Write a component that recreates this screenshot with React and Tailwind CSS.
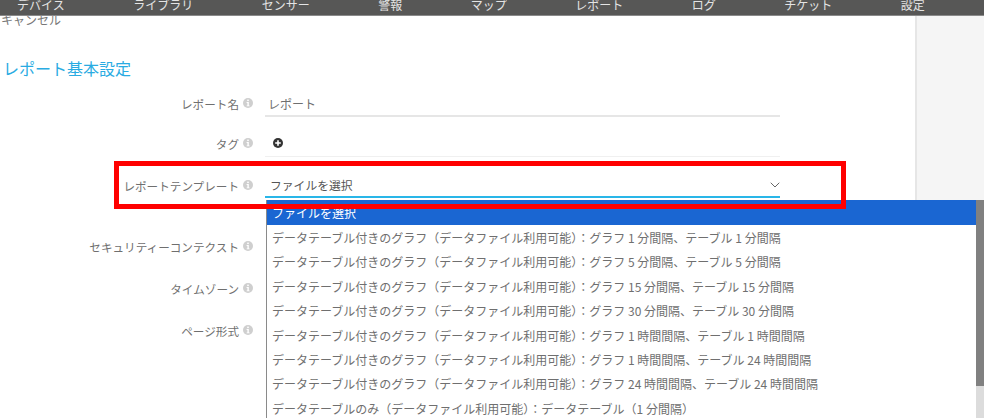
import React from "react";
import { ChevronDown } from "lucide-react";

const NAV = ["デバイス", "ライブラリ", "センサー", "警報", "マップ", "レポート", "ログ", "チケット", "設定"];

const OPTIONS = [
  "データテーブル付きのグラフ（データファイル利用可能）：グラフ 1 分間隔、テーブル 1 分間隔",
  "データテーブル付きのグラフ（データファイル利用可能）：グラフ 5 分間隔、テーブル 5 分間隔",
  "データテーブル付きのグラフ（データファイル利用可能）：グラフ 15 分間隔、テーブル 15 分間隔",
  "データテーブル付きのグラフ（データファイル利用可能）：グラフ 30 分間隔、テーブル 30 分間隔",
  "データテーブル付きのグラフ（データファイル利用可能）：グラフ 1 時間間隔、テーブル 1 時間間隔",
  "データテーブル付きのグラフ（データファイル利用可能）：グラフ 1 時間間隔、テーブル 24 時間間隔",
  "データテーブル付きのグラフ（データファイル利用可能）：グラフ 24 時間間隔、テーブル 24 時間間隔",
  "データテーブルのみ（データファイル利用可能）：データテーブル（1 分間隔）",
];

function InfoDot() {
  return (
    <svg viewBox="0 0 10 10" className="w-[10px] h-[10px] shrink-0 mb-[3px]">
      <circle cx="5" cy="5" r="5" fill="#cfcfcf" />
      <rect x="4.2" y="1.6" width="1.6" height="1.5" fill="#fff" />
      <path d="M3.6 4h2.2v3.4h.8v.9H3.6v-.9h.8V4.9h-.8z" fill="#fff" />
    </svg>
  );
}

function Label({ text }) {
  return (
    <div className="w-[253px] shrink-0 flex items-center justify-end gap-[4px] text-[11.6px] leading-[17px] text-[#6f6f6f]">
      <span>{text}</span>
      <InfoDot />
    </div>
  );
}

export default function App() {
  return (
    <div
      className="relative w-[984px] h-[418px] overflow-hidden bg-[#f5f5f5]"
      style={{ fontFamily: '"Noto Sans CJK JP", "Noto Sans", sans-serif' }}
    >
      <div className="relative z-10 h-[16px] bg-[#575756] border-b border-[#8a8a8a] overflow-hidden">
        <div className="flex gap-[68.5px] pl-[17px] -mt-[4px] text-[12px] leading-[18px] text-[#e4e4e4]">
          {NAV.map((n) => (
            <span key={n} className="shrink-0">{n}</span>
          ))}
        </div>
      </div>

      <div className="flex flex-col w-[917px] h-[402px] bg-white border-r-2 border-[#e6e6e6]">
        <div className="text-[12px] leading-[12px] text-[#777] pl-[1px] -mt-[2px]">キャンセル</div>
        <div className="text-[16px] leading-[16px] text-[#29abe2] pl-[3px] mt-[34px]">レポート基本設定</div>

        <div className="flex flex-col">
          <div className="flex h-[41px] items-end">
            <div className="pb-[4px]"><Label text="レポート名" /></div>
            <div className="ml-[12px] w-[515px] h-[41px] flex items-end pb-[3px] pl-[3px] text-[12px] leading-[17px] text-[#6f6f6f] border-b-2 border-[#e6e6e6]">
              レポート
            </div>
          </div>
          <div className="flex h-[40px] items-end">
            <div className="pb-[4px]"><Label text="タグ" /></div>
            <div className="ml-[12px] w-[515px] h-[40px] flex items-end pb-[6px] pl-[8px] border-b border-[#f0f0f0]">
              <svg viewBox="0 0 10 10" className="w-[10px] h-[10px] mb-[2px]">
                <circle cx="5" cy="5" r="5" fill="#333" />
                <path d="M4.2 2.2h1.6v2h2v1.6h-2v2H4.2v-2h-2V4.2h2z" fill="#fff" />
              </svg>
            </div>
          </div>
          <div className="flex h-[41px] items-end">
            <div className="pb-[3px]"><Label text="レポートテンプレート" /></div>
            <div className="ml-[12px] w-[515px] h-[41px] flex items-end justify-between pb-[3px] pl-[5px] text-[11.8px] leading-[17px] text-[#555] border-b-2 border-[#29b6e8]">
              <span>ファイルを選択</span>
              <ChevronDown size={16} strokeWidth={1.5} className="text-[#666] -mr-[3px]" />
            </div>
          </div>
          <div className="flex h-[42px] mt-[28px] items-center">
            <Label text="セキュリティーコンテクスト" />
          </div>
          <div className="flex h-[42px] items-center">
            <Label text="タイムゾーン" />
          </div>
          <div className="flex h-[42px] items-center">
            <Label text="ページ形式" />
          </div>
        </div>
      </div>

      {/* open select list */}
      <div className="absolute left-[266px] top-[200px] w-[718px] h-[218px] bg-white border-l border-[#8a8a8a] flex">
        <div className="flex-1 min-w-0">
          <div className="h-[25px] mb-[1px] bg-[#1a66d2] text-white text-[12px] leading-[25px] pl-[5px]">ファイルを選択</div>
          {OPTIONS.map((o) => (
            <div key={o} className="h-[24.4px] leading-[24.4px] text-[12px] text-[#6f6f6f] pl-[5px] whitespace-nowrap">
              {o}
            </div>
          ))}
        </div>
        <div className="w-[8px] bg-[#dcdcdc]">
          <div className="h-[186px] bg-[#808080]" />
        </div>
      </div>

      {/* red annotation box */}
      <div className="absolute left-[114px] top-[161px] w-[732px] h-[48px] border-[5px] border-[#ff0000]" />
    </div>
  );
}
